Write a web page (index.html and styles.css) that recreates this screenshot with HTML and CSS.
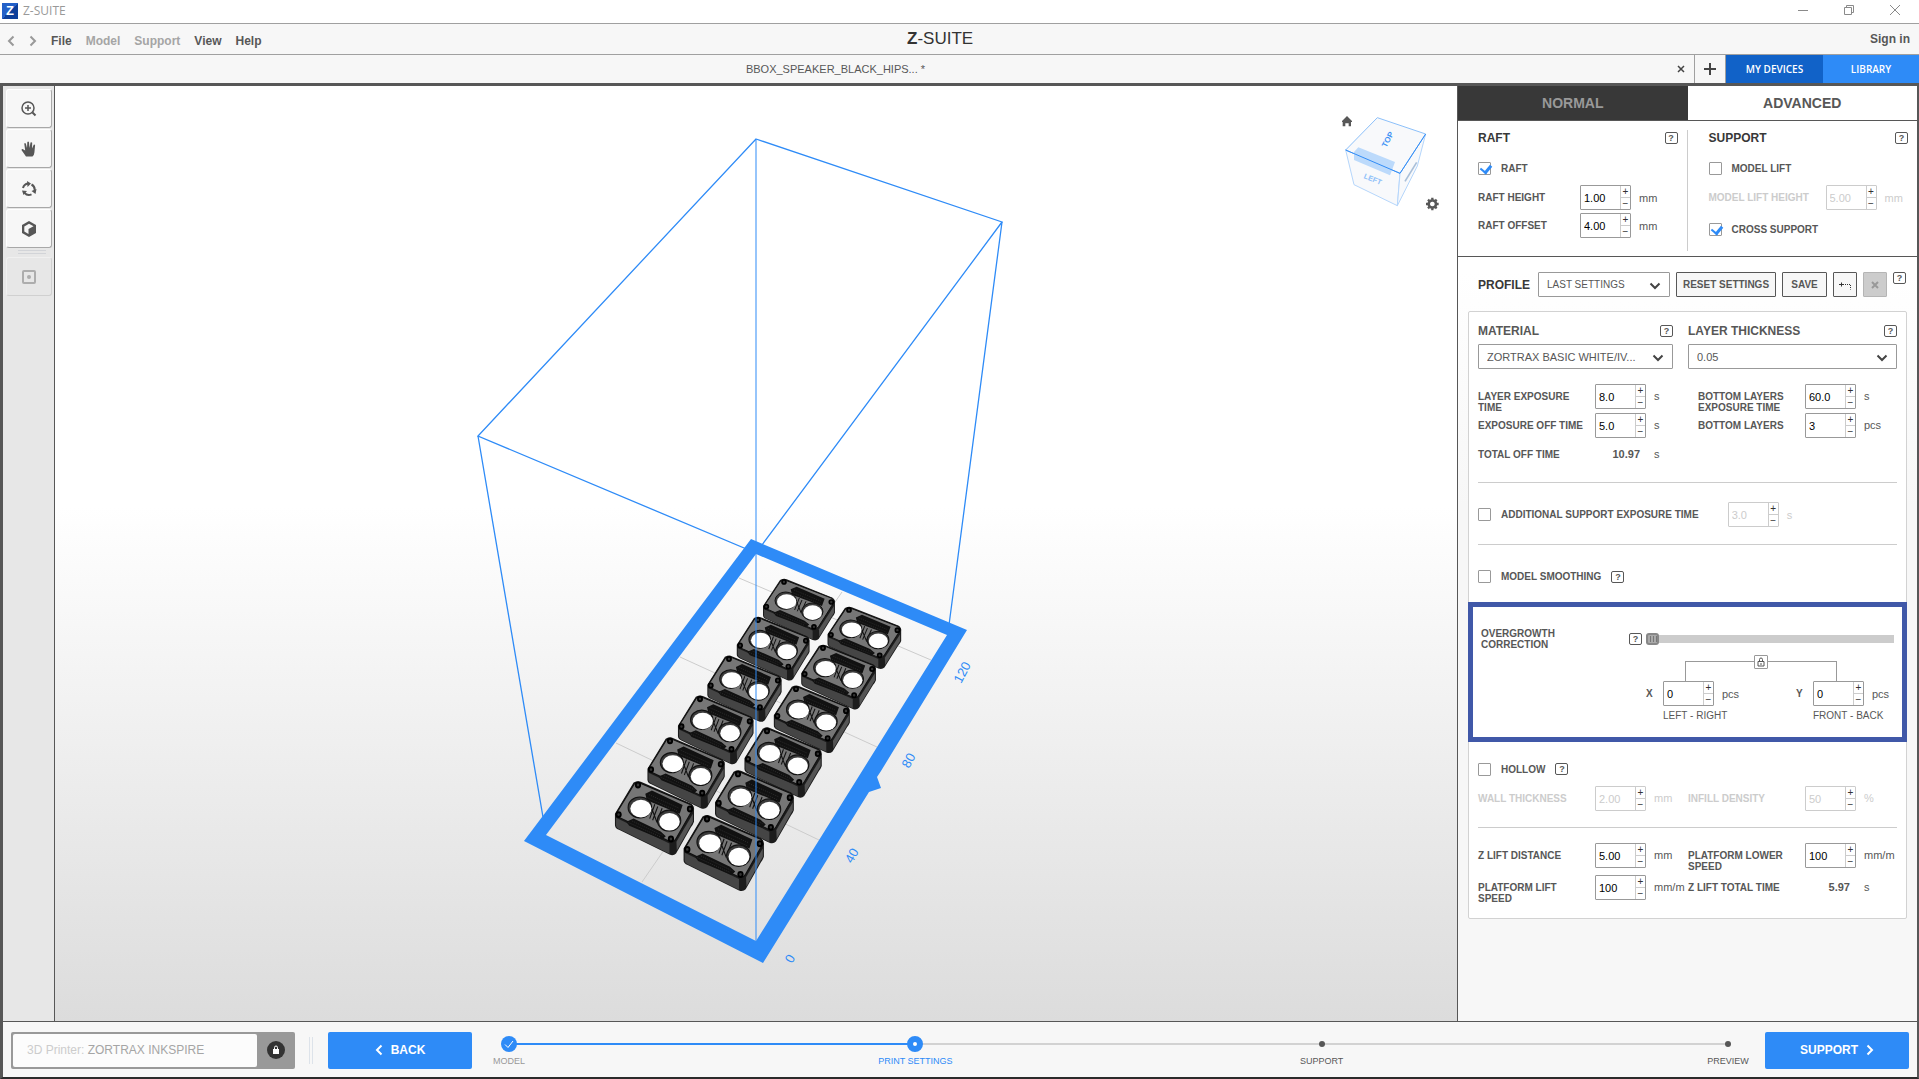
FILE: index.html
```html
<!DOCTYPE html>
<html lang="en">
<head>
    <meta charset="UTF-8">
    <meta name="viewport" content="width=device-width, initial-scale=1.0">
    <title>Z-SUITE</title>
    <link rel="stylesheet" href="styles.css">
</head>
<body>
    <header class="titlebar">
        <span class="app-icon">Z</span>
        <span class="app-name">Z-SUITE</span>
        <div class="window-buttons">
            <button aria-label="Minimize"><svg width="12" height="12" viewBox="0 0 12 12"><path d="M1 6.500h10"/></svg></button>
            <button aria-label="Restore"><svg width="12" height="12" viewBox="0 0 12 12"><path d="M1.500 3.500h7v7h-7zM3.500 3.500v-2h7v7h-2"/></svg></button>
            <button aria-label="Close"><svg width="12" height="12" viewBox="0 0 12 12"><path d="M1 1l10 10M11 1L1 11"/></svg></button>
        </div>
    </header>

    <nav class="menubar">
        <div class="menu">
            <button class="arrow" aria-label="Back"><svg width="8" height="12" viewBox="0 0 8 12"><path d="M6.500 1.500L2 6l4.500 4.500"/></svg></button>
            <button class="arrow" aria-label="Forward"><svg width="8" height="12" viewBox="0 0 8 12"><path d="M1.500 1.500L6 6l-4.500 4.500"/></svg></button>
            <button>File</button>
            <button disabled>Model</button>
            <button disabled>Support</button>
            <button>View</button>
            <button>Help</button>
        </div>
        <div class="logo"><b>Z</b>-SUITE</div>
        <a class="sign-in" href="#">Sign in</a>
    </nav>

    <div class="tabs">
        <div class="file-tab">
            <span>BBOX_SPEAKER_BLACK_HIPS... *</span>
            <button aria-label="Close file"><svg width="8" height="8" viewBox="0 0 8 8"><path d="M1 1l6 6M7 1L1 7"/></svg></button>
        </div>
        <button class="add-tab" aria-label="New file"><svg width="12" height="12" viewBox="0 0 12 12"><path d="M6 0v12M0 6h12"/></svg></button>
        <a class="devices" href="#">MY DEVICES</a>
        <a class="library" href="#">LIBRARY</a>
    </div>

    <main>
        <aside class="tools">
            <button aria-label="Zoom"><svg width="16" height="16" viewBox="0 0 16 16"><circle cx="7" cy="7" r="6" class="line"/><path class="line" d="M7 4v6M4 7h6"/><path class="thick" d="M11.500 11.500L14.500 14.500"/></svg></button>
            <button aria-label="Move"><svg width="16" height="16" viewBox="0 0 16 16"><path class="fill" d="M5 15.500L.8 9.600Q0 8 1.600 8L4.200 9.600 3.300 3Q3.500 1.500 4.800 2.400L6 7 6.300 1.200Q7.100-.2 8 1.200L8.500 7 9.500 1.600Q10.500.6 11.200 1.800L11 7.500 12.700 3.700Q13.800 3 14.100 4.200L13.400 11.500Q13.200 14 11.500 15.500z"/></svg></button>
            <button aria-label="Rotate"><svg width="16" height="16" viewBox="0 0 16 16"><path class="thick" d="M2 7a6 6 0 0 1 5-4.500M10.500 3.500a6 6 0 0 1 3 6.500M10.500 13.300a6 6 0 0 1-7-1.500"/><path class="fill" d="M6 0l4 2.500L6.500 6zM15.500 8l-1 5-4-3zM1 9.500l5 .5-3.500 4z"/></svg></button>
            <button aria-label="Views"><svg width="16" height="16" viewBox="0 0 16 16"><path class="fill" fill-rule="evenodd" d="M8 0l7 4v8l-7 4-7-4V4zM8 2.700L3.300 5.400v5.200L7.500 13V8L12.500 5.300z"/></svg></button>
            <hr>
            <button disabled aria-label="Center"><svg width="16" height="16" viewBox="0 0 16 16"><rect class="thick" x="2" y="2" width="12" height="12" rx="1"/><circle class="fill" cx="8" cy="8" r="2"/></svg></button>
        </aside>

        <section class="viewport">
            <svg class="scene" viewBox="55 86 1402 935">
                <defs>
                    <g id="speaker">
                        <path fill="#1c1c1c" d="M-12-6Q0-12 8-8L146 47Q155 54 153 64V92Q150 100 145 105L104 171Q97 178 86 174L-52 112Q-64 108-63 98V72Z"/>
                        <path fill="#454545" d="M-60 82L86 146V172L-52 110Q-61 106-60 98Z"/>
                        <path fill="#555" d="M105 142L150 72V92L106 164Z"/>
                        <path fill="#767676" stroke="#111" stroke-width="3" d="M-10-3Q0-8 8-4L144 49Q152 54 148 64L104 134Q98 145 86 141L-54 80Q-62 75-56 66Z"/>
                        <path fill="#111" d="M20 22L38 14 122 50 114 72 92 64 24 38zM-32 92L-12 84 62 116 76 128 66 136-24 102z"/>
                        <path stroke="#555" stroke-width="1" stroke-dasharray="3 3" d="M30 24l82 34M26 32l84 34M-26 94l88 36M-16 90l84 36"/>
                        <path stroke="#111" stroke-width="3" fill="none" d="M46 48l-14 36M54 54l-14 34M66 58l-14 32M34 50l18 44"/>
                        <g fill="#fff" stroke="#111" stroke-width="3">
                            <ellipse cx="5" cy="56" rx="32" ry="26" fill="#3a3a3a"/>
                            <ellipse cx="85" cy="89" rx="32" ry="26" fill="#3a3a3a"/>
                            <ellipse cx="8" cy="59" rx="29" ry="22" stroke="none"/>
                            <ellipse cx="86" cy="92" rx="28" ry="22" stroke="none"/>
                        </g>
                        <g fill="#333" stroke="#000" stroke-width="5">
                            <circle r="6"/><circle cx="142" cy="60" r="6"/><circle cx="90" cy="135" r="6"/><circle cx="-53" cy="74" r="6"/>
                        </g>
                    </g>
                </defs>
                <g class="wire">
                    <path d="M756 139L1002 222L756 553L478 436Z"/>
                    <path d="M478 436L544 823M1002 222L949 625"/>
                </g>
                <path class="grid" d="M739 578L931 660M680 657L877 747M616 743L819 840M842 592L642 882"/>
                <path class="frame" fill-rule="evenodd" d="M751 539L967 630L881 771 877 777 881 788 869 792L763 963L524 841ZM756 554L546 835L756 941L947 635Z"/>
                <use href="#speaker" transform="translate(784 582) scale(.333 .333)"/>
                <use href="#speaker" transform="translate(849 610) scale(.341 .336)"/>
                <use href="#speaker" transform="translate(758 620) scale(.337 .345)"/>
                <use href="#speaker" transform="translate(823 648) scale(.346 .350)"/>
                <use href="#speaker" transform="translate(729 659) scale(.344 .358)"/>
                <use href="#speaker" transform="translate(796 689) scale(.352 .365)"/>
                <use href="#speaker" transform="translate(700 699) scale(.350 .372)"/>
                <use href="#speaker" transform="translate(767 731) scale(.358 .380)"/>
                <use href="#speaker" transform="translate(670 741) scale(.358 .386)"/>
                <use href="#speaker" transform="translate(738 774) scale(.365 .395)"/>
                <use href="#speaker" transform="translate(638 785) scale(.366 .400)"/>
                <use href="#speaker" transform="translate(707 819) scale(.372 .411)"/>
                <path class="axis" d="M756 139V943"/>
                <g class="ruler">
                    <text transform="translate(961 684) rotate(-62)">120</text>
                    <text transform="translate(909 769) rotate(-62)">80</text>
                    <text transform="translate(852 864) rotate(-60)">40</text>
                    <text transform="translate(792 964) rotate(-60)">0</text>
                </g>
            </svg>
            <svg class="cube" width="130" height="140" viewBox="0 0 390 420">
                <path fill="#575757" d="M66 93L81 78l15 15v3h-3v13h-7v-9H76v9h-8V96h-2z"/>
                <g fill="#f8f9fb" stroke="#b5d6fb" stroke-width="3">
                    <path d="M77 180L240 250L232 347L102 284Z"/>
                    <path d="M240 250L317 132L292 228L232 347Z"/>
                </g>
                <path fill="#f8f9fb" stroke="#8cc0fa" stroke-width="3" d="M172 83L317 132L240 250L77 180Z"/>
                <path fill="#bcdafb" d="M115 172L225 216L210 256L102 210V186Z"/>
                <path stroke="#318cf6" stroke-width="3" fill="none" d="M77 180L240 250L317 132"/>
                <path stroke="#a9bfd9" stroke-width="5" d="M255 274L290 217"/>
                <text class="top-side" transform="translate(199 174) rotate(-62)">TOP</text>
                <text class="left-side" transform="translate(130 264) rotate(22)">LEFT</text>
                <path fill="none" stroke="#575757" stroke-width="8" d="M337 331a11 11 0 1 0 .1 0"/>
                <path fill="none" stroke="#575757" stroke-width="7" d="M337 323v6M337 355v6M318 342h6M350 342h6M324 329l4 4M346 351l4 4M350 329l-4 4M328 351l-4 4"/>
            </svg>
        </section>

        <aside class="panel">
            <div class="modes">
                <button>NORMAL</button>
                <button class="active">ADVANCED</button>
            </div>
            <div class="basics">
                <section>
                    <div class="head"><h2>RAFT</h2><button class="help" aria-label="Help">?</button></div>
                    <label class="check"><input type="checkbox" checked>RAFT</label>
                    <div class="line-row">
                        <label for="raft-height">RAFT HEIGHT</label>
                        <div class="spin"><input id="raft-height" value="1.00"><div><button>+</button><button>−</button></div></div>
                        <span>mm</span>
                    </div>
                    <div class="line-row">
                        <label for="raft-offset">RAFT OFFSET</label>
                        <div class="spin"><input id="raft-offset" value="4.00"><div><button>+</button><button>−</button></div></div>
                        <span>mm</span>
                    </div>
                </section>
                <section class="support">
                    <div class="head"><h2>SUPPORT</h2><button class="help" aria-label="Help">?</button></div>
                    <label class="check"><input type="checkbox">MODEL LIFT</label>
                    <div class="line-row off">
                        <label for="lift-height">MODEL LIFT HEIGHT</label>
                        <div class="spin"><input id="lift-height" value="5.00" disabled><div><button>+</button><button>−</button></div></div>
                        <span>mm</span>
                    </div>
                    <label class="check"><input type="checkbox" checked>CROSS SUPPORT</label>
                </section>
            </div>

            <div class="profile">
                <label for="profile">PROFILE</label>
                <div class="select small">
                    <select id="profile"><option>LAST SETTINGS</option></select>
                    <svg width="12" height="8" viewBox="0 0 12 8"><path d="M1.500 1.500L6 6l4.500-4.500"/></svg>
                </div>
                <button class="reset">RESET SETTINGS</button>
                <button class="save">SAVE</button>
                <button class="square" aria-label="Undo"><svg width="14" height="10" viewBox="0 0 14 10"><path d="M1 4.500h5M3.500 2.500v4"/><path stroke-dasharray="1 1" d="M7 4.500h5.500v5"/></svg></button>
                <button class="square" disabled aria-label="Delete"><svg width="8" height="8" viewBox="0 0 8 8"><path d="M1 1l6 6M7 1L1 7"/></svg></button>
                <button class="help" aria-label="Help">?</button>
            </div>

            <div class="settings">
                <div class="materials">
                    <div>
                        <div class="head"><label for="material">MATERIAL</label><button class="help" aria-label="Help">?</button></div>
                        <div class="select">
                            <select id="material"><option>ZORTRAX BASIC WHITE/IV...</option></select>
                            <svg width="12" height="8" viewBox="0 0 12 8"><path d="M1.500 1.500L6 6l4.500-4.500"/></svg>
                        </div>
                    </div>
                    <div>
                        <div class="head"><label for="thickness">LAYER THICKNESS</label><button class="help" aria-label="Help">?</button></div>
                        <div class="select">
                            <select id="thickness"><option>0.05</option></select>
                            <svg width="12" height="8" viewBox="0 0 12 8"><path d="M1.500 1.500L6 6l4.500-4.500"/></svg>
                        </div>
                    </div>
                </div>

                <div class="fields exposure">
                    <label for="exposure">LAYER EXPOSURE TIME</label>
                    <div class="spin"><input id="exposure" value="8.0"><div><button>+</button><button>−</button></div></div>
                    <span>s</span>
                    <label class="indent" for="bottom-exposure">BOTTOM LAYERS EXPOSURE TIME</label>
                    <div class="spin"><input id="bottom-exposure" value="60.0"><div><button>+</button><button>−</button></div></div>
                    <span>s</span>
                    <label for="off-time">EXPOSURE OFF TIME</label>
                    <div class="spin"><input id="off-time" value="5.0"><div><button>+</button><button>−</button></div></div>
                    <span>s</span>
                    <label class="indent" for="bottom-layers">BOTTOM LAYERS</label>
                    <div class="spin"><input id="bottom-layers" value="3"><div><button>+</button><button>−</button></div></div>
                    <span>pcs</span>
                    <span class="name">TOTAL OFF TIME</span>
                    <output>10.97</output>
                    <span>s</span>
                </div>

                <div class="option additional off">
                    <label class="check"><input type="checkbox">ADDITIONAL SUPPORT EXPOSURE TIME</label>
                    <div class="spin"><input value="3.0" aria-label="Additional support exposure time" disabled><div><button>+</button><button>−</button></div></div>
                    <span>s</span>
                </div>
                <div class="option smoothing">
                    <label class="check"><input type="checkbox">MODEL SMOOTHING</label>
                    <button class="help" aria-label="Help">?</button>
                </div>

                <div class="overgrowth">
                    <div class="slider-row">
                        <label for="overgrowth">OVERGROWTH CORRECTION</label>
                        <button class="help" aria-label="Help">?</button>
                        <input type="range" id="overgrowth" min="0" max="10" value="0">
                    </div>
                    <div class="link">
                        <button aria-label="Lock axes"><svg width="8" height="10" viewBox="0 0 8 10"><path d="M1 4.500h6v4.500H1zM2.500 4V2.500a1.500 1.500 0 0 1 3 0V4M4 6v2"/></svg></button>
                    </div>
                    <div class="axes">
                        <div>
                            <label for="corr-x">X</label>
                            <div class="spin"><input id="corr-x" value="0"><div><button>+</button><button>−</button></div></div>
                            <span>pcs</span>
                            <small>LEFT - RIGHT</small>
                        </div>
                        <div>
                            <label for="corr-y">Y</label>
                            <div class="spin"><input id="corr-y" value="0"><div><button>+</button><button>−</button></div></div>
                            <span>pcs</span>
                            <small>FRONT - BACK</small>
                        </div>
                    </div>
                </div>

                <div class="option hollow">
                    <label class="check"><input type="checkbox">HOLLOW</label>
                    <button class="help" aria-label="Help">?</button>
                </div>
                <div class="fields walls off">
                    <label for="wall">WALL THICKNESS</label>
                    <div class="spin"><input id="wall" value="2.00" disabled><div><button>+</button><button>−</button></div></div>
                    <span>mm</span>
                    <label for="infill">INFILL DENSITY</label>
                    <div class="spin"><input id="infill" value="50" disabled><div><button>+</button><button>−</button></div></div>
                    <span>%</span>
                </div>
                <div class="fields lift">
                    <label for="z-lift">Z LIFT DISTANCE</label>
                    <div class="spin"><input id="z-lift" value="5.00"><div><button>+</button><button>−</button></div></div>
                    <span>mm</span>
                    <label for="lower-speed">PLATFORM LOWER SPEED</label>
                    <div class="spin"><input id="lower-speed" value="100"><div><button>+</button><button>−</button></div></div>
                    <span>mm/m</span>
                    <label for="lift-speed">PLATFORM LIFT SPEED</label>
                    <div class="spin"><input id="lift-speed" value="100"><div><button>+</button><button>−</button></div></div>
                    <span>mm/m</span>
                    <span class="name">Z LIFT TOTAL TIME</span>
                    <output>5.97</output>
                    <span>s</span>
                </div>
            </div>
        </aside>
    </main>

    <footer>
        <div class="printer">
            <div class="printer-name"><span>3D Printer:</span> ZORTRAX INKSPIRE</div>
            <button aria-label="Locked"><svg width="18" height="18" viewBox="0 0 18 18"><circle cx="9" cy="9" r="9" fill="#333"/><path fill="#fff" d="M6 8h6v5H6z"/><path fill="none" stroke="#fff" d="M7.500 8V6.500a1.500 1.500 0 0 1 3 0V8"/></svg></button>
        </div>
        <div class="grip"></div>
        <button class="go"><svg width="8" height="12" viewBox="0 0 8 12"><path d="M6.500 1.500L2 6l4.500 4.500"/></svg>BACK</button>
        <ol class="steps">
            <li class="done"><i><svg width="16" height="16" viewBox="0 0 16 16"><path d="M4 8.500l3 3L12 5"/></svg></i>MODEL</li>
            <li class="current"><i></i>PRINT SETTINGS</li>
            <li><i></i>SUPPORT</li>
            <li><i></i>PREVIEW</li>
        </ol>
        <button class="go">SUPPORT<svg width="8" height="12" viewBox="0 0 8 12"><path d="M1.500 1.500L6 6l-4.500 4.500"/></svg></button>
    </footer>
</body>
</html>
```
FILE: styles.css
```css
* {
    margin: 0;
    padding: 0;
    box-sizing: border-box;
}
body {
    display: flex;
    flex-direction: column;
    height: 100vh;
    background: #f7f7f7;
    color: #575757;
    font: 11px "Liberation Sans", Arial, sans-serif;
    overflow: hidden;
}
button, input, select {
    font: inherit;
    color: inherit;
    background: none;
    border: 0;
    outline: 0;
    border-radius: 0;
}
a {
    color: inherit;
    text-decoration: none;
}
svg {
    display: block;
    fill: none;
    stroke: none;
}

/* title bar */
.titlebar {
    display: flex;
    align-items: center;
    height: 24px;
    padding: 0 1px 4px 2px;
    background: #fff;
    border-bottom: 1px solid #a0a0a0;
    flex: none;
}
.app-icon {
    width: 16px;
    height: 16px;
    margin: 3px 5px 0 0;
    background: linear-gradient(135deg, #2360c8 50%, #0d3f9a 50%);
    color: #fff;
    font: bold 13px/16px "Liberation Sans", sans-serif;
    text-align: center;
}
.app-name {
    margin-top: 3px;
    color: #999;
    font: 12px/16px "Open Sans", "Noto Sans", sans-serif;
}
.window-buttons {
    display: flex;
    margin-left: auto;
}
.window-buttons button {
    width: 46px;
    height: 20px;
    display: flex;
    align-items: center;
    justify-content: center;
}
.window-buttons svg {
    stroke: #8a8a8a;
}

/* menu */
.menubar {
    display: grid;
    grid-template-columns: 49fr auto 51fr;
    align-items: center;
    height: 31px;
    padding: 0 9px 0 7px;
    border-bottom: 1px solid #a0a0a0;
    font-size: 12px;
    font-weight: bold;
    flex: none;
}
.menu {
    display: flex;
    gap: 14px;
    padding-top: 3px;
}
.menu button:disabled {
    color: #a5a5a5;
}
.arrow svg {
    stroke: #999;
    stroke-width: 2;
}
.logo {
    color: #333;
    font: 17px/24px "Liberation Sans", sans-serif;
}
.sign-in {
    text-align: right;
}

/* file tabs */
.tabs {
    display: flex;
    height: 31px;
    border-bottom: 3px solid #575757;
    flex: none;
}
.file-tab {
    display: flex;
    align-items: center;
    flex: 1;
    border-right: 1px solid #a0a0a0;
}
.file-tab span {
    flex: 1;
    text-align: center;
}
.file-tab button {
    width: 23px;
    padding-left: 6px;
}
.file-tab svg, .add-tab svg {
    stroke: #444;
    stroke-width: 2;
}
.file-tab svg {
    stroke-width: 1.5;
}
.add-tab {
    width: 31px;
    padding-left: 9px;
    border-right: 1px solid #a0a0a0;
}
.devices, .library {
    width: 97px;
    background: #1162c8;
    color: #fff;
    font: 600 10px/29px "Open Sans", "Noto Sans", sans-serif;
    height: 28px;
    text-align: center;
}
.library {
    width: 96px;
    background: #2e8bf7;
}

main {
    display: flex;
    flex: 1;
    min-height: 0;
    border: solid #575757;
    border-width: 0 2px 0 3px;
}

/* tools on the left */
.tools {
    display: flex;
    flex-direction: column;
    gap: 1px;
    width: 52px;
    padding: 3px 2px 0 3px;
    background: #e7e7e7;
    border-right: 1px solid #575757;
    flex: none;
}
.tools button {
    display: flex;
    align-items: center;
    justify-content: center;
    height: 39px;
    background: #f7f7f7;
    border: 1px solid #a8a8a8;
    border-top-color: #fff;
    border-left-color: #fff;
    border-radius: 3px;
}
.tools button:disabled {
    background: #e7e7e7;
    border-color: #f0f0f0 #d0d0d0 #d0d0d0 #f0f0f0;
}
.tools .line, .tools .thick {
    stroke: #575757;
    stroke-width: 1.5;
}
.tools .thick {
    stroke-width: 2;
}
.tools .fill {
    fill: #575757;
}
.tools button:disabled svg {
    opacity: .4;
}
.tools hr {
    height: 4px;
    margin: 1px 6px 2px 12px;
    border: solid #d2d4d8;
    border-width: 1px 0;
}

/* 3D view */
.viewport {
    position: relative;
    flex: 1;
    min-width: 0;
    background: linear-gradient(#fff 45%, #dcdcdc);
}
.scene {
    width: 100%;
    height: 100%;
}
.wire {
    stroke: #2e8bf7;
    stroke-width: 1.3;
}
.grid {
    stroke: #ccc;
}
.frame {
    fill: #2e8bf7;
}
.axis {
    stroke: #2e8bf7;
    stroke-width: 2;
    opacity: .5;
}
.ruler {
    fill: #2e8bf7;
    font-size: 13px;
}
.cube {
    position: absolute;
    top: 4px;
    right: 7px;
}
.top-side, .left-side {
    fill: #3f93f5;
    font-size: 24px;
    font-weight: bold;
}
.left-side {
    fill: #8dbff9;
    font-size: 22px;
}

/* settings panel */
.panel {
    width: 460px;
    background: linear-gradient(#fff 20%, #f7f7f7 45%);
    border-left: 1px solid #575757;
    flex: none;
    overflow: hidden;
}
.modes {
    display: flex;
    height: 35px;
    border-bottom: 1px solid #575757;
}
.modes button {
    flex: 1;
    background: #383838;
    color: #999;
    font-size: 14px;
    font-weight: bold;
}
.modes .active {
    background: #fff;
    color: #575757;
}
.basics {
    display: flex;
    height: 136px;
    padding: 9px 0 5px;
    background: #fff;
    border-bottom: 1px solid #575757;
}
.basics section {
    flex: 1;
    padding: 0 9px 0 20px;
}
.basics .support {
    padding-left: 21px;
    border-left: 1px solid #ccc;
}
.head {
    display: flex;
    align-items: center;
    justify-content: space-between;
    height: 16px;
    font-size: 12px;
    font-weight: bold;
}
h2, .profile label {
    color: #383838;
    font-size: 12px;
    font-weight: bold;
}
.help {
    width: 13px;
    height: 12px;
    border: 1px solid #575757;
    border-radius: 2px;
    color: #575757;
    font-size: 9px;
    font-weight: bold;
    line-height: 10px;
    text-align: center;
    flex: none;
}
label, .name {
    font-size: 10px;
    font-weight: bold;
}
.head label {
    font-size: 12px;
}
.check {
    display: flex;
    align-items: center;
    gap: 10px;
    height: 13px;
}
.check input {
    appearance: none;
    width: 13px;
    height: 13px;
    background: #fff;
    border: 1px solid #999;
    border-radius: 1px;
}
.check input:checked::before {
    content: "";
    display: block;
    width: 5px;
    height: 8px;
    margin-left: 3px;
    border: solid #2e8bf7;
    border-width: 0 3px 2px 0;
    transform: rotate(40deg);
}
.basics .check {
    margin: 16px 0 10px;
}
.support .line-row + .check {
    margin: 13px 0 0;
}
.line-row {
    display: flex;
    align-items: center;
    gap: 8px;
    margin-bottom: 3px;
}
.line-row label {
    width: 94px;
}
.support .line-row label {
    width: 109px;
    white-space: nowrap;
}

.spin {
    display: flex;
    width: 51px;
    height: 25px;
    background: #fff;
    border: 1px solid #999;
    border-radius: 1px;
    flex: none;
}
.spin input {
    width: 39px;
    padding-left: 3px;
    color: #000;
}
.spin > div {
    display: flex;
    flex-direction: column;
    width: 10px;
    border-left: 1px solid #ccc;
}
.spin button {
    flex: 1;
    color: #333;
    font-size: 10px;
    line-height: 10px;
}
.spin button + button {
    border-top: 1px solid #ccc;
}
.off > label:not(.check), .off > span, .off .spin input {
    color: #ccc;
}
.off .spin {
    border-color: #ccc;
}

.profile {
    display: flex;
    align-items: center;
    gap: 6px;
    height: 25px;
    margin: 15px 9px 14px 20px;
}
.profile label {
    width: 54px;
}
.profile > button:not(.help) {
    height: 25px;
    background: #f7f7f7;
    border: 1px solid #575757;
    border-radius: 1px;
    font-size: 10px;
    font-weight: bold;
}
.profile .reset {
    width: 100px;
}
.profile .save {
    width: 45px;
}
.profile .square {
    width: 24px;
    padding-left: 4px;
}
.profile > .square:disabled:not(.help) {
    padding-left: 7px;
    background: #ccc;
    border-color: #b5b5b5;
}
.profile button svg {
    stroke: #333;
}
.profile .square:disabled svg {
    stroke: #999;
    stroke-width: 2;
}
.profile .help {
    align-self: flex-start;
}
.select {
    position: relative;
}
.select select {
    appearance: none;
    display: block;
    width: 100%;
    height: 25px;
    padding: 0 24px 0 8px;
    background: #fff;
    border: 1px solid #999;
    border-radius: 1px;
}
.select svg {
    position: absolute;
    top: 10px;
    right: 9px;
    stroke: #444;
    stroke-width: 2;
    pointer-events: none;
}
.small {
    width: 132px;
}
.small select {
    font-size: 10px;
}

.settings {
    margin: 0 10px;
    padding: 11px 9px 14px;
    background: #fff;
    border: 1px solid #d2d2d2;
    border-radius: 2px;
}
.materials {
    display: grid;
    grid-template-columns: 195px 1fr;
    gap: 15px;
}
.materials .head {
    margin-bottom: 5px;
}
.fields {
    display: grid;
    grid-template-columns: 109px 51px 26px 109px 51px 1fr;
    grid-auto-rows: minmax(29px, auto);
    column-gap: 8px;
    align-items: start;
}
.fields label, .fields > span, .fields output {
    padding-top: 7px;
    line-height: 11px;
}
.fields .name {
    white-space: nowrap;
}
.fields .indent {
    padding-left: 10px;
}
.fields output {
    padding-right: 6px;
    font-weight: bold;
    text-align: right;
}
.exposure {
    margin-top: 15px;
    padding-bottom: 11px;
    border-bottom: 1px solid #ccc;
}
.option {
    display: flex;
    align-items: center;
    gap: 8px;
}
.additional {
    height: 62px;
    padding-top: 2px;
    border-bottom: 1px solid #ccc;
}
.additional .spin {
    margin-left: 21px;
}
.smoothing, .hollow {
    gap: 10px;
}
.smoothing {
    height: 57px;
    padding-top: 6px;
}

.overgrowth {
    margin: 0 -10px;
    padding: 21px 8px 20px;
    border: 5px solid #4058a8;
    height: 140px;
}
.slider-row {
    display: flex;
    align-items: center;
    gap: 4px;
}
.slider-row label {
    width: 144px;
    padding-right: 40px;
    line-height: 11px;
}
input[type=range] {
    appearance: none;
    flex: 1;
    height: 8px;
    background: #ccc;
}
input[type=range]::-webkit-slider-thumb {
    appearance: none;
    width: 13px;
    height: 12px;
    background: repeating-linear-gradient(90deg, transparent 0 2px, #777 2px 3px) 0 1px / 9px 6px no-repeat #aaa;
    border: 2px solid #888;
    border-radius: 3px;
}
.link {
    display: flex;
    justify-content: center;
    width: 152px;
    height: 20px;
    margin: 11px 0 0 204px;
    border: solid #999;
    border-width: 1px 1px 0;
}
.link button {
    width: 14px;
    height: 14px;
    margin-top: -7px;
    padding-left: 2px;
    background: #fff;
    border: 1px solid #999;
    border-radius: 1px;
}
.link svg {
    stroke: #575757;
}
.axes {
    display: flex;
    justify-content: space-between;
    padding-left: 165px;
}
.axes > div {
    display: grid;
    grid-template-columns: 17px 51px auto;
    align-items: center;
    row-gap: 4px;
    width: 98px;
}
.axes span {
    margin-left: 8px;
}
.axes small {
    grid-column: 2 / 4;
    font-size: 10px;
    line-height: 12px;
    white-space: nowrap;
}

.hollow {
    height: 44px;
    padding-top: 10px;
}
.walls {
    padding-bottom: 12px;
    border-bottom: 1px solid #ccc;
}
.lift {
    row-gap: 3px;
    padding-top: 15px;
}

/* footer */
footer {
    display: flex;
    align-items: center;
    height: 58px;
    padding: 1px 8px 0;
    border: solid #575757;
    border-width: 1px 2px 2px 3px;
    border-bottom-color: #2b2b2b;
    flex: none;
}
.printer {
    display: flex;
    align-items: center;
    width: 284px;
    height: 37px;
    padding: 2px;
    background: #999;
    border-radius: 2px;
}
.printer-name {
    flex: 1;
    padding-left: 14px;
    background: #fcfcfc;
    border-radius: 2px;
    color: #a5a5a5;
    font-size: 12px;
    line-height: 33px;
}
.printer-name span {
    color: #ccc;
}
.printer button {
    width: 36px;
    padding-left: 10px;
}
.grip {
    width: 4px;
    height: 27px;
    margin: 0 15px 0 14px;
    border: solid #dde3ea;
    border-width: 0 1px;
}
.go {
    display: flex;
    align-items: center;
    justify-content: center;
    gap: 8px;
    width: 144px;
    height: 37px;
    background: #2e8bf7;
    border-radius: 2px;
    color: #fff;
    font-size: 12px;
    font-weight: bold;
}
.go svg {
    stroke: #fff;
    stroke-width: 2;
}
.steps {
    display: flex;
    flex: 1;
    justify-content: space-between;
    margin: 3px 17px 0;
    padding: 0 20px;
    list-style: none;
    background: linear-gradient(90deg, #2e8bf7 33%, #d2d2d2 33%) 0 7px / 100% 2px no-repeat content-box;
    font-size: 9px;
    white-space: nowrap;
}
.steps li {
    display: flex;
    flex-direction: column;
    align-items: center;
    gap: 3px;
    width: 40px;
    margin: 0 -20px;
    line-height: 12px;
}
.steps i {
    width: 6px;
    height: 6px;
    margin: 5px;
    background: #575757;
    border-radius: 50%;
}
.steps .done i, .steps .current i {
    width: 16px;
    height: 16px;
    margin: 0;
    background: #2e8bf7;
}
.steps .done {
    color: #999;
}
.steps .done svg {
    stroke: #fff;
}
.steps .current {
    color: #2e8bf7;
}
.steps .current i {
    background: #fff;
    border: 6px solid #2e8bf7;
}
```
